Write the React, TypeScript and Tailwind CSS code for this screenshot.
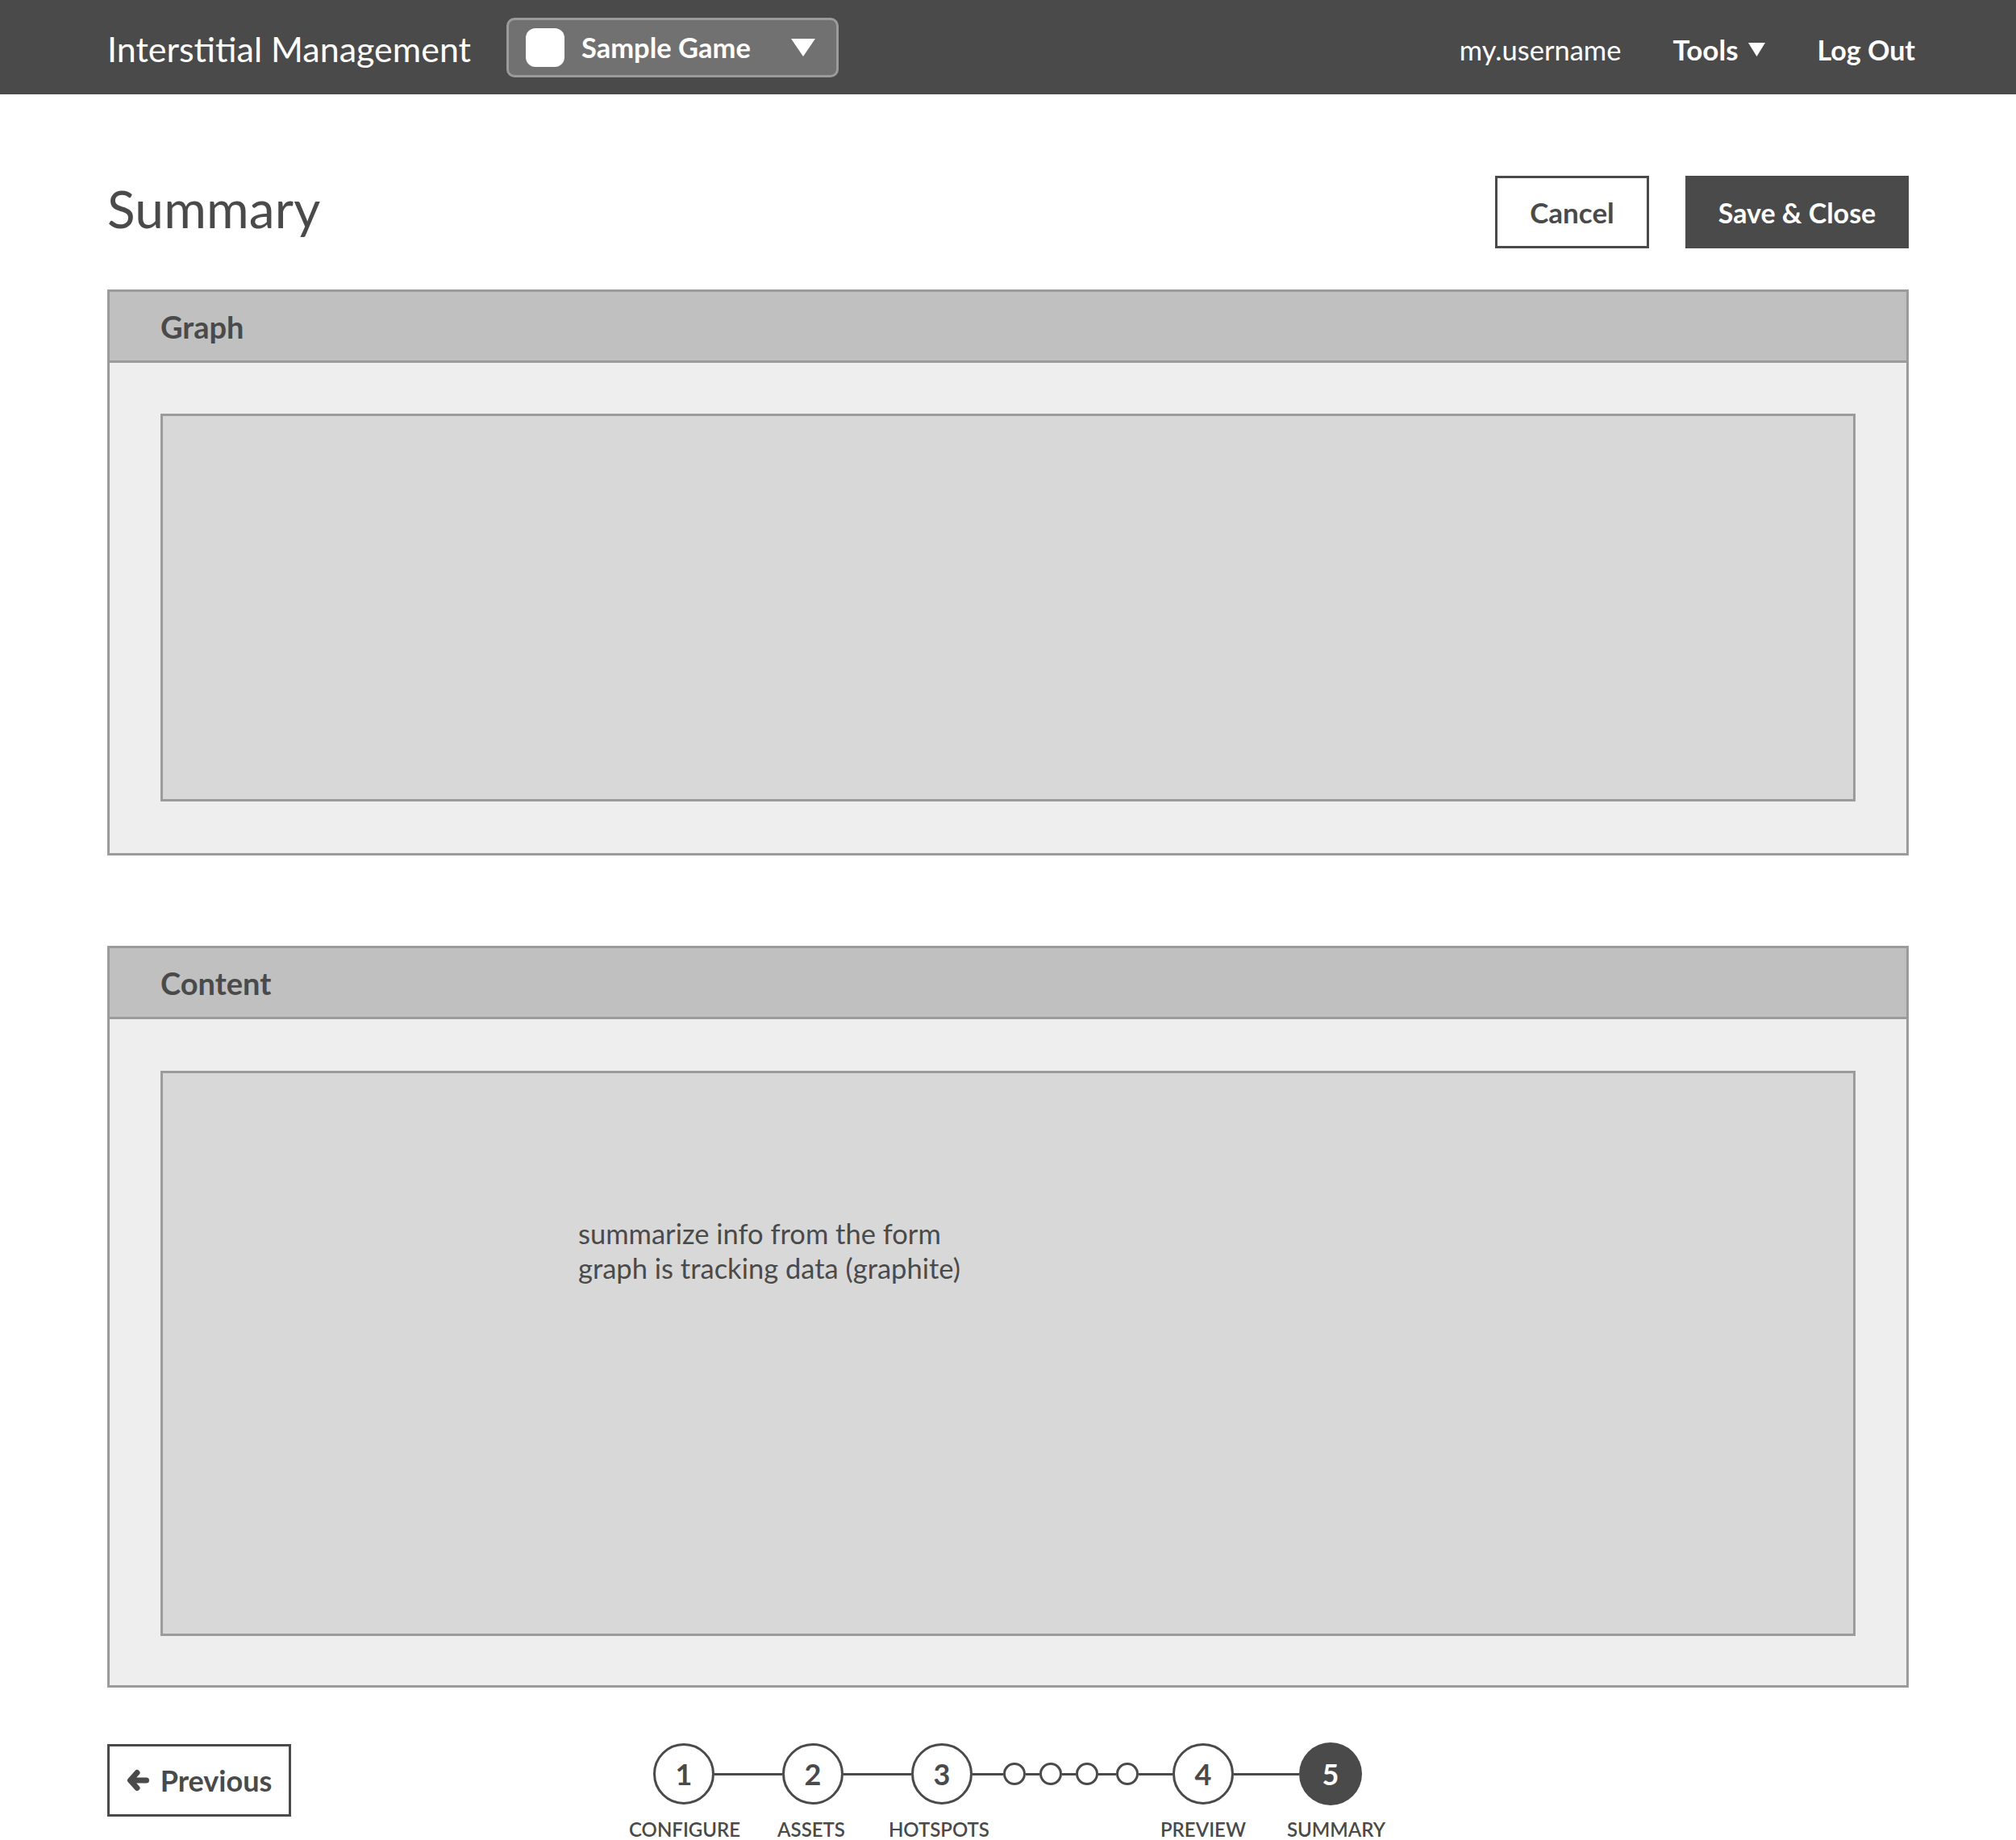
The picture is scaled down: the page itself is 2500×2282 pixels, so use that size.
function Triangle({ className }: { className: string }) {
  return (
    <svg viewBox="0 0 30 22" preserveAspectRatio="none" className={className}>
      <polygon points="0,0 30,0 15,22" fill="#ffffff" />
    </svg>
  );
}

function Panel({ title, bodyClass, children }: { title: string; bodyClass: string; children?: React.ReactNode }) {
  return (
    <section className="border-[3px] border-[#9b9b9b] bg-[#eeeeee]">
      <div className="flex h-[88px] items-center border-b-[3px] border-[#9b9b9b] bg-[#c0c0c0] pl-[63px] pt-[2px] text-[38px] font-bold text-[#4a4a4a]">
        {title}
      </div>
      <div className={`px-[63px] ${bodyClass}`}>
        <div className="h-full border-[3px] border-[#9b9b9b] bg-[#d8d8d8]">{children}</div>
      </div>
    </section>
  );
}

function Step({ n, active }: { n: number; active?: boolean }) {
  return (
    <div
      className={
        active
          ? "flex h-[78px] w-[78px] shrink-0 items-center justify-center rounded-full bg-[#4a4a4a] text-[36px] font-bold text-white"
          : "flex h-[76px] w-[76px] shrink-0 items-center justify-center rounded-full border-[3px] border-[#4a4a4a] bg-white text-[36px] font-bold text-[#4a4a4a]"
      }
    >
      {n}
    </div>
  );
}

function Dot() {
  return <div className="h-[28px] w-[28px] shrink-0 rounded-full border-[3px] border-[#4a4a4a] bg-white" />;
}

function Line({ width }: { width: string }) {
  return <div className={`h-[3px] shrink-0 bg-[#4a4a4a] ${width}`} />;
}

export default function App() {
  return (
    <div className="h-[2282px] overflow-hidden bg-white font-['Lato',sans-serif] text-[#4a4a4a]">
      <header className="flex h-[117px] items-center bg-[#4a4a4a] pl-[133px] pr-[125px] pt-[6px] text-white">
        <div className="w-[495px] text-[43px] font-normal">Interstitial Management</div>
        <div className="flex h-[74px] w-[412px] -translate-y-[3px] items-center rounded-[10px] border-[3px] border-[#9b9b9b] bg-[#717171] pl-[21px]">
          <div className="h-[48px] w-[48px] rounded-[12px] bg-white" />
          <span className="ml-[21px] w-[260px] text-[34.5px] font-bold">Sample Game</span>
          <Triangle className="h-[22px] w-[30px]" />
        </div>
        <nav className="ml-auto flex items-center">
          <span className="text-[34.5px] font-normal">my.username</span>
          <span className="ml-[64px] text-[35px] font-bold">Tools</span>
          <Triangle className="ml-[12px] h-[17px] w-[21px]" />
          <span className="ml-[65px] text-[34px] font-bold">Log Out</span>
        </nav>
      </header>

      <main className="px-[133px]">
        <div className="flex items-center justify-between pt-[101px]">
          <h1 className="-translate-y-[4px] text-[64px] font-normal leading-none tracking-[0.2px]">Summary</h1>
          <div className="flex gap-[45px]">
            <button className="flex h-[90px] w-[191px] items-center justify-center border-[3px] border-[#4a4a4a] text-[35px] font-bold">
              Cancel
            </button>
            <button className="flex h-[90px] w-[277px] items-center justify-center bg-[#4a4a4a] text-[34px] font-bold text-white">
              Save &amp; Close
            </button>
          </div>
        </div>

        <div className="mt-[51px] flex flex-col gap-[112px]">
          <Panel title="Graph" bodyClass="h-[608px] pb-[64px] pt-[63px]" />
          <Panel title="Content" bodyClass="h-[826px] pb-[61px] pt-[64px]">
            <div className="pl-[515px] pt-[177px] text-[34.5px] leading-[43px]">
              <p>summarize info from the form</p>
              <p>graph is tracking data (graphite)</p>
            </div>
          </Panel>
        </div>

        <div className="mt-[68px] flex items-start">
          <button className="mt-[2px] flex h-[90px] w-[228px] items-center justify-center gap-[14px] border-[3px] border-[#4a4a4a] text-[36px] font-bold">
            <svg viewBox="0 0 28 28" className="h-[28px] w-[28px]" fill="none" stroke="#4a4a4a" strokeWidth={7} strokeLinecap="round" strokeLinejoin="round">
              <path d="M13 4.5 L4.5 14 L13 23.5 M6 14 H24.5" />
            </svg>
            Previous
          </button>
          <div className="ml-[419px] flex flex-col">
            <div className="flex items-center pl-[30px]">
              <Step n={1} />
              <Line width="w-[84px]" />
              <Step n={2} />
              <Line width="w-[84px]" />
              <Step n={3} />
              <Line width="w-[38px]" />
              <Dot />
              <Line width="w-[17px]" />
              <Dot />
              <Line width="w-[17px]" />
              <Dot />
              <Line width="w-[22px]" />
              <Dot />
              <Line width="w-[42px]" />
              <Step n={4} />
              <Line width="w-[81px]" />
              <Step n={5} active />
            </div>
            <div className="mt-[15px] flex text-[24px] font-semibold uppercase leading-[30px]">
              <span>Configure</span>
              <span className="ml-[46px]">Assets</span>
              <span className="ml-[54px]">Hotspots</span>
              <span className="ml-[212px]">Preview</span>
              <span className="ml-[51px]">Summary</span>
            </div>
          </div>
        </div>
      </main>
    </div>
  );
}
